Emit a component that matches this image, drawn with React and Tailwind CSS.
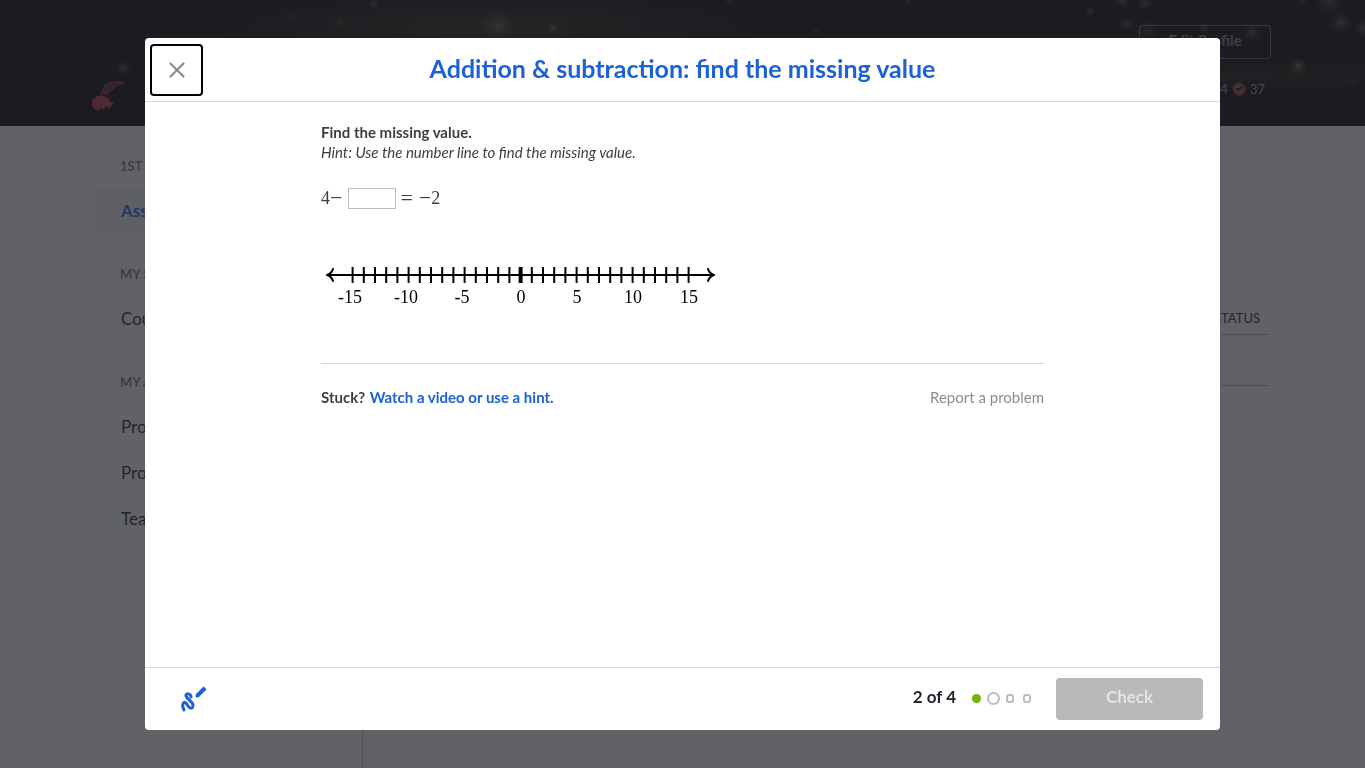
import React from 'react';
import { X } from 'lucide-react';

const stars = [
    { x: 123, y: 68, r: 4, o: 0.4 },
    { x: 292, y: 16, r: 3, o: 0.2 },
    { x: 340, y: 22, r: 3, o: 0.2 },
    { x: 374, y: 4, r: 3, o: 0.3 },
    { x: 498, y: 26, r: 9, o: 0.35 },
    { x: 553, y: 28, r: 3, o: 0.4 },
    { x: 729, y: 1, r: 2, o: 0.4 },
    { x: 816, y: 31, r: 2, o: 0.25 },
    { x: 908, y: 1, r: 2, o: 0.3 },
    { x: 1090, y: 11, r: 3, o: 0.35 },
    { x: 1122, y: 1, r: 4, o: 0.35 },
    { x: 1126, y: 24, r: 4, o: 0.4 },
    { x: 1145, y: 3, r: 4, o: 0.4 },
    { x: 1147, y: 31, r: 7, o: 0.2 },
    { x: 1204, y: 28, r: 3, o: 0.3 },
    { x: 1252, y: 32, r: 5, o: 0.35 },
    { x: 1298, y: 66, r: 5, o: 0.5 },
    { x: 1303, y: 1, r: 2, o: 0.4 },
    { x: 1329, y: 1, r: 7, o: 0.35 },
    { x: 1341, y: 23, r: 6, o: 0.4 },
    { x: 1363, y: 28, r: 5, o: 0.4 },
    { x: 1353, y: 81, r: 3, o: 0.15 },
];

const sections = [
    { title: '1st Class', links: ['Assignments'] },
    { title: 'My stuff', links: ['Courses'] },
    { title: 'My account', links: ['Progress', 'Profile', 'Teachers'] },
];

const ticks = Array.from({ length: 31 }, (_, i) => i - 15);
const labels = [-15, -10, -5, 0, 5, 10, 15];

const Banner = () => (
    <header className="relative h-[126px] bg-[#040508] bg-[radial-gradient(ellipse_at_36%_20%,#2a251b_0%,transparent_24%),radial-gradient(ellipse_at_90%_60%,#1c1710_0%,transparent_16%)] overflow-hidden">
        <svg className="absolute inset-0 w-full h-full" aria-hidden="true">
            <defs>
                <radialGradient id="glow">
                    <stop offset="0" stopColor="#c9c2ac" />
                    <stop offset="0.35" stopColor="#a59c7c" stopOpacity="0.6" />
                    <stop offset="1" stopColor="#8a8060" stopOpacity="0" />
                </radialGradient>
            </defs>
            {stars.map((s) => (
                <circle key={s.x} cx={s.x} cy={s.y} r={s.r * 2} fill="url(#glow)" opacity={s.o} />
            ))}
        </svg>
        <div className="relative flex justify-between px-[94px] h-full">
            <svg className="-ml-1 mt-[78px]" width="40" height="34" viewBox="0 0 40 34" aria-hidden="true">
                <path d="M10 18C11 8 17 3 25 3L36 3L31 7L26 8L24 12L20 14L18 17L13 17Z" fill="#6b2027" />
                <path d="M2 25C2 20 7 17 13 18C18 19 20 22 20 24L24 25L21 28L19 31L16 28L14 32L11 30L8 33L5 31C3 30 2 28 2 25Z" fill="#c03343" />
            </svg>
            <div className="flex flex-col items-end pt-[25px]">
                <button className="w-[132px] h-[34px] pb-1 rounded border border-white/40 text-[15px] font-bold text-white/50">Edit Profile</button>
                <div className="flex items-center gap-1 mt-5 pr-1.5 text-[13px] leading-5 text-white/60">
                    <span>4</span>
                    <svg width="14" height="14" viewBox="0 0 14 14" aria-hidden="true">
                        <circle cx="7" cy="7" r="5" fill="#777" stroke="#a83340" strokeWidth="3" />
                        <path d="M4 6L7 8L10 5" fill="none" stroke="#111" strokeWidth="2" />
                    </svg>
                    <span>37</span>
                </div>
            </div>
        </div>
    </header>
);

const Sidebar = () => (
    <nav className="w-[269px] shrink-0 border-r border-[#21242c]/30 pt-[30px]">
        {sections.map((section) => (
            <div key={section.title} className="mb-[30px]">
                <h2 className="pl-[26px] mb-3 text-[13px] leading-5 font-bold uppercase text-[#21242c]/60">{section.title}</h2>
                {section.links.map((link) => (
                    <a
                        key={link}
                        href="#"
                        className={
                            link === 'Assignments'
                                ? 'block pl-[27px] h-[46px] leading-[45px] rounded bg-[#1865f2]/5 font-bold text-[#1865f2]'
                                : 'block pl-[27px] h-[46px] leading-[45px]'
                        }
                    >
                        {link}
                    </a>
                ))}
            </div>
        ))}
    </nav>
);

const NumberLine = () => (
    <svg width="400" height="50" viewBox="0 0 400 50" role="img" aria-label="Number line">
        <g fill="none" stroke="#000" strokeWidth="2">
            <path d="M7 15H393" />
            <path d="M12 9C11 12 9 14 6 15C9 16 11 18 12 21M387 9C388 12 390 14 393 15C390 16 388 18 387 21" strokeLinejoin="round" strokeLinecap="round" />
            {ticks.map((n) => (
                <path key={n} d={`M${199.6 + n * 11.2} 7V23`} strokeWidth={n === 0 ? 4 : 2} />
            ))}
        </g>
        <g className="font-['Liberation_Serif',serif] text-[18px]" textAnchor="middle">
            {labels.map((n) => (
                <text key={n} x={(n < 0 ? 197 : 200) + n * 11.2} y="43">{n}</text>
            ))}
        </g>
    </svg>
);

const Exercise = () => (
    <div className="flex-1 px-[176px] pt-5 text-[15px] leading-5 text-[#3b3e40]">
        <p className="font-bold">Find the missing value.</p>
        <p className="italic">Hint: Use the number line to find the missing value.</p>

        <div className="flex items-center mt-[25px] h-[22px] font-['Liberation_Serif',serif] text-[18px]">
            <label htmlFor="answer" className="flex items-center">
                4<span className="text-[22px]">−</span>
            </label>
            <input id="answer" type="text" className="w-12 h-[21px] ml-1.5 mr-1 border border-[#babec2] bg-white px-1" />
            <span className="text-[22px]">=</span>
            <span className="ml-1.5 text-[22px]">−</span>
            <span>2</span>
        </div>

        <div className="mt-[51px]">
            <NumberLine />
        </div>

        <div className="flex justify-between mt-[53px] pt-[23px] border-t border-[#d6d8da]">
            <p className="font-bold">
                Stuck? <a href="#" className="ml-px text-[#1b62d8]">Watch a video or use a hint.</a>
            </p>
            <a href="#" className="text-[#888d93]">Report a problem</a>
        </div>
    </div>
);

const Footer = () => (
    <footer className="flex items-center h-[63px] pl-[34px] pr-[17px] border-t border-[#d6d8da]">
        <button aria-label="Scratchpad" className="pb-0.5">
            <svg width="30" height="30" viewBox="0 0 30 30" fill="none" stroke="#1b62d8" strokeLinecap="round">
                <path d="M12 14C12 10 6 10 7 13C8 16 14 19 14 22C14 26 11 26 9 23C7 19 5 18 4 21C3 23 4 25 5 27" strokeWidth="3" />
                <path d="M18 13L26 5" strokeWidth="4" strokeLinecap="butt" />
                <path d="M18 13L25 6" strokeWidth="3" />
            </svg>
        </button>
        <span className="ml-auto pb-1 text-[17px] font-bold text-[#21242c]">2 of 4</span>
        <div className="flex items-center gap-1.5 ml-4 mr-[25px] pb-0.5">
            <span className="size-[9px] rounded-full bg-[#71b307]" />
            <span className="size-[13px] rounded-full border-2 border-[#babec2]" />
            <span className="w-2 h-[9px] rounded-[3px] border-2 border-[#babec2]" />
            <span className="w-2 h-[9px] ml-[3px] rounded-[3px] border-2 border-[#babec2]" />
        </div>
        <button disabled className="w-[147px] h-[42px] pb-1 rounded bg-[#b7b9bb] text-[17px] font-bold text-[#e3e4e6]">Check</button>
    </footer>
);

const App = () => {
    return (
        <div className="h-screen overflow-hidden flex flex-col bg-white font-[Lato,sans-serif] text-[17px] text-[#21242c]">
            <Banner />
            <div className="flex flex-1 pl-[94px] pr-24">
                <Sidebar />
                <main className="flex-1 pt-[182px]">
                    <table className="w-full text-[13px]">
                        <thead>
                            <tr className="border-b border-[#21242c]/30 h-[26px]">
                                <th className="pb-1 pr-[9px] text-right font-normal">STATUS</th>
                            </tr>
                        </thead>
                        <tbody>
                            <tr className="border-b border-[#21242c]/30 h-[51px]">
                                <td></td>
                            </tr>
                        </tbody>
                    </table>
                </main>
            </div>

            {/* Exercise modal */}
            <div className="fixed inset-0 flex px-[145px] py-[38px] bg-[#24262b]/72">
                <div role="dialog" aria-labelledby="title" className="flex-1 flex flex-col rounded bg-white overflow-hidden">
                    <div className="grid grid-cols-[1fr_auto_1fr] items-center h-16 px-[5px] border-b border-[#d6d8da]">
                        <button aria-label="Close" className="flex items-center justify-center w-[53px] h-[52px] rounded border-2 border-black text-[#888d93]">
                            <X size={26} strokeWidth={2} />
                        </button>
                        <h1 id="title" className="pb-1 text-[25px] leading-8 font-bold text-[#1b62d8]">Addition &amp; subtraction: find the missing value</h1>
                    </div>
                    <Exercise />
                    <Footer />
                </div>
            </div>
        </div>
    );
};

export default App;
